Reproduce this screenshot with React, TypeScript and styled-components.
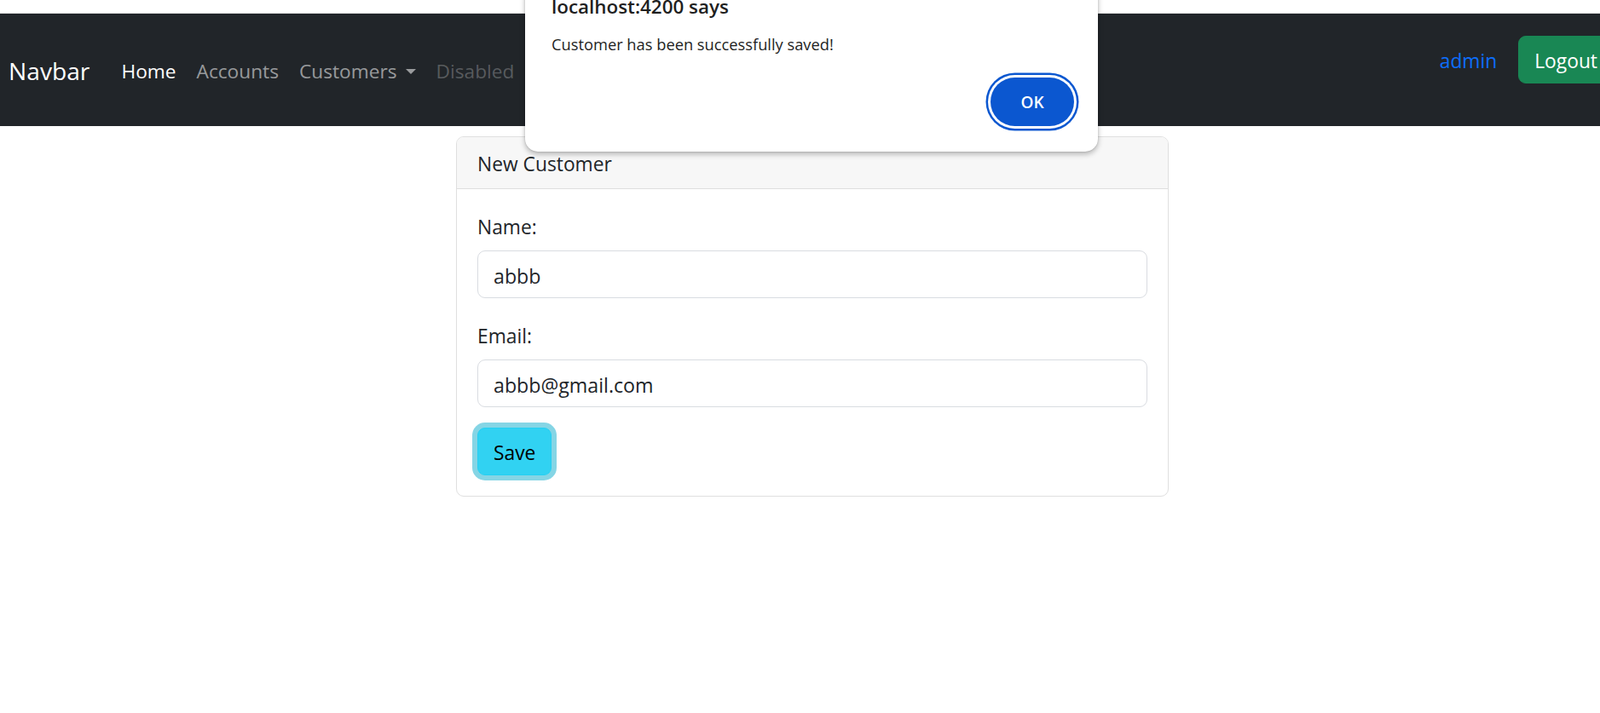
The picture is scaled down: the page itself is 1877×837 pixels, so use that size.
import React from 'react';
import styled, { createGlobalStyle } from 'styled-components';

const Global = createGlobalStyle`
  html, body { margin: 0; padding: 0; overflow: hidden; background: #fff; }
  body { font-family: "Open Sans", "Noto Sans", sans-serif; color: #212529; }
  *, *::before, *::after { box-sizing: border-box; }
`;

const Page = styled.div`
  position: relative;
  width: 100%;
  height: 837px;
  overflow: hidden;
`;

const TopStrip = styled.div`
  height: 16px;
  border-bottom: 1px solid #e4e4e4;
  background: #fff;
`;

const Navbar = styled.nav`
  height: 132px;
  background: #212529;
  display: flex;
  align-items: center;
  padding: 3px 0 0 10px;
`;

const Brand = styled.a`
  font-size: 28.2px;
  line-height: 45px;
  color: #fff;
  margin-right: 25px;
  text-decoration: none;
`;

const NavList = styled.ul`
  display: flex;
  list-style: none;
  margin: 0;
  padding: 0;
`;

type LinkState = 'active' | 'normal' | 'disabled';

const NavLink = styled.a<{ $state: LinkState }>`
  display: flex;
  align-items: center;
  padding: 0 12px;
  font-size: 22.7px;
  line-height: 36px;
  text-decoration: none;
  color: ${(p) =>
    p.$state === 'active'
      ? '#ffffff'
      : p.$state === 'disabled'
      ? 'rgba(255,255,255,0.25)'
      : 'rgba(255,255,255,0.55)'};
`;

const Caret = styled.span`
  display: inline-block;
  margin-left: 10px;
  width: 0;
  height: 0;
  border-left: 6.5px solid transparent;
  border-right: 6.5px solid transparent;
  border-top: 6.5px solid currentColor;
`;

const RightGroup = styled.div`
  margin-left: auto;
  align-self: flex-start;
  margin-top: 23px;
  margin-right: -16px;
  display: flex;
  align-items: center;
  gap: 25px;
`;

const UserLink = styled.a`
  font-size: 22.8px;
  line-height: 36px;
  padding-top: 3px;
  color: #0d6efd;
  text-decoration: none;
`;

const LogoutButton = styled.button`
  font-family: inherit;
  font-size: 22.8px;
  line-height: 36px;
  padding: 11px 18px 7px;
  border: 1px solid #198754;
  border-radius: 9px;
  background: #198754;
  color: #fff;
`;

const Card = styled.section`
  margin: 12px 0 0 535px;
  width: 836px;
  border: 1px solid #dfdfdf;
  border-radius: 9px;
  overflow: hidden;
`;

const CardHeader = styled.div`
  padding: 14px 24px 10px;
  font-size: 22.8px;
  line-height: 36px;
  background: #f7f7f7;
  border-bottom: 1px solid #dfdfdf;
`;

const CardBody = styled.form`
  padding: 24px;
  display: flex;
  flex-direction: column;
  align-items: flex-start;
`;

const FormGroup = styled.div`
  width: 100%;
  margin-bottom: 24px;
`;

const Label = styled.label`
  display: block;
  font-size: 22.8px;
  line-height: 36px;
  padding-top: 3px;
  margin-bottom: 9px;
`;

const Input = styled.input`
  display: block;
  width: 100%;
  height: 56px;
  padding: 11px 18px 7px;
  font-family: inherit;
  font-size: 23.2px;
  line-height: 36px;
  color: #212529;
  border: 1px solid #d9dce1;
  border-radius: 9px;
  background: #fff;
  outline: none;
`;

const SaveButton = styled.button`
  font-family: inherit;
  font-size: 22.8px;
  line-height: 36px;
  padding: 11px 18px 7px;
  border: 1px solid #25cff2;
  border-radius: 9px;
  background: #31d2f2;
  color: #000;
  box-shadow: 0 0 0 6px rgba(11, 172, 204, 0.5);
`;

const Dialog = styled.div`
  position: absolute;
  left: 616px;
  top: -20px;
  width: 672px;
  height: 198px;
  padding: 16px 28px 0 31px;
  background: #fff;
  border-radius: 15px;
  box-shadow: 0 3px 6px rgba(0, 0, 0, 0.28), 0 0 2px rgba(0, 0, 0, 0.18);
  display: flex;
  flex-direction: column;
  font-family: "Open Sans", "Noto Sans", sans-serif;
`;

const DialogTitle = styled.div`
  font-size: 22.4px;
  line-height: 24px;
  font-weight: 600;
  color: #1f1f1f;
`;

const DialogMessage = styled.div`
  margin-top: 20px;
  font-size: 18.3px;
  line-height: 24px;
  color: #1f1f1f;
`;

const DialogActions = styled.div`
  margin-top: 27px;
  display: flex;
  justify-content: flex-end;
`;

const OkButton = styled.button`
  width: 98px;
  height: 57px;
  border: none;
  border-radius: 29px;
  background: #0b57d0;
  color: #fff;
  font-family: inherit;
  font-size: 19px;
  font-weight: 600;
  box-shadow: 0 0 0 3px #fff, 0 0 0 5.5px #0b57d0;
`;

export default function App() {
  return (
    <Page>
      <Global />
      <TopStrip />
      <Navbar>
        <Brand href="#">Navbar</Brand>
        <NavList>
          <li><NavLink $state="active" href="#">Home</NavLink></li>
          <li><NavLink $state="normal" href="#">Accounts</NavLink></li>
          <li>
            <NavLink $state="normal" href="#">
              Customers
              <Caret />
            </NavLink>
          </li>
          <li><NavLink $state="disabled">Disabled</NavLink></li>
        </NavList>
        <RightGroup>
          <UserLink href="#">admin</UserLink>
          <LogoutButton type="button">Logout</LogoutButton>
        </RightGroup>
      </Navbar>

      <Card>
        <CardHeader>New Customer</CardHeader>
        <CardBody onSubmit={(e) => e.preventDefault()}>
          <FormGroup>
            <Label>Name:</Label>
            <Input defaultValue="abbb" />
          </FormGroup>
          <FormGroup>
            <Label>Email:</Label>
            <Input defaultValue="abbb@gmail.com" />
          </FormGroup>
          <SaveButton type="submit">Save</SaveButton>
        </CardBody>
      </Card>

      <Dialog role="alertdialog">
        <DialogTitle>localhost:4200 says</DialogTitle>
        <DialogMessage>Customer has been successfully saved!</DialogMessage>
        <DialogActions>
          <OkButton type="button">OK</OkButton>
        </DialogActions>
      </Dialog>
    </Page>
  );
}
